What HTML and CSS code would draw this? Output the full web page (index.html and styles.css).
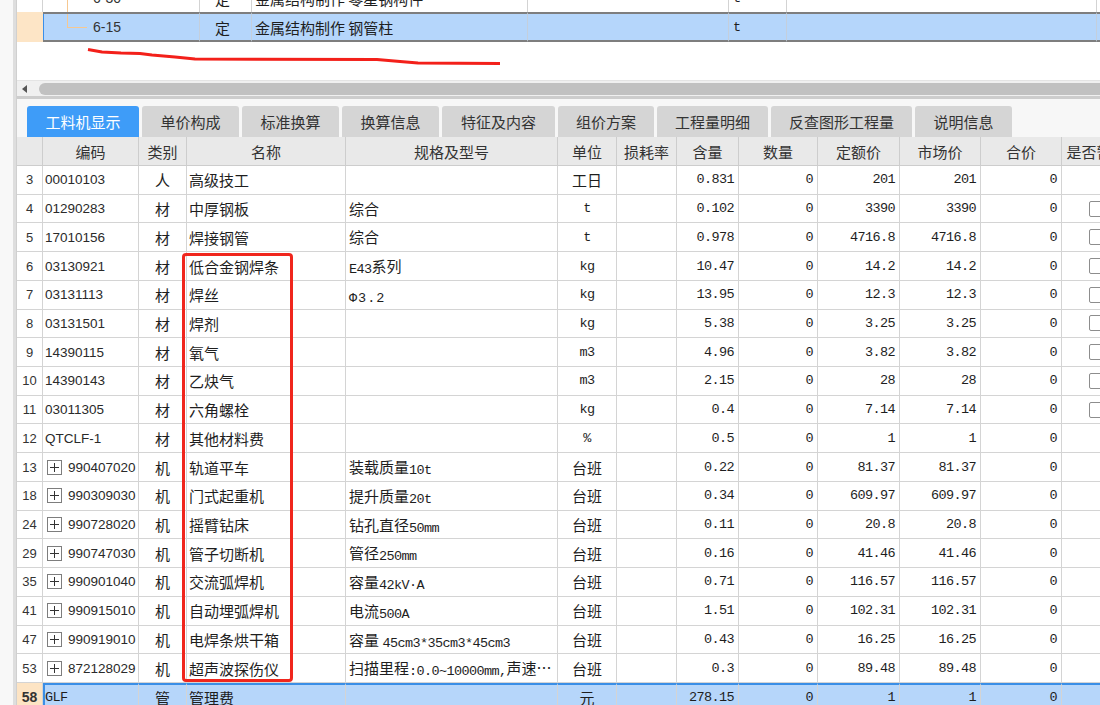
FILE: index.html
```html
<!DOCTYPE html>
<html lang="zh-CN">
<head>
<meta charset="utf-8">
<title>工料机显示</title>
<link rel="stylesheet" href="styles.css">
</head>
<body>
<div class="app">
  <div class="strip"></div>
  <div class="main">
    <div class="upper">
      <div class="trow prev">
        <span class="tn"></span>
        <span class="tcode"><i class="tree-v"></i><b class="tc-text">6-30</b></span>
        <span class="tcat">定</span>
        <span class="tname">金属结构制作 零星钢构件</span>
        <span></span>
        <span class="tunit"><i class="m">t</i></span>
        <span></span>
        <span></span>
      </div>
      <div class="trow sel">
        <span class="tn"></span>
        <span class="tcode first"><i class="tree-v short"></i><i class="tree-h"></i><b class="tc-text">6-15</b></span>
        <span class="tcat">定</span>
        <span class="tname">金属结构制作 钢管柱</span>
        <span></span>
        <span class="tunit"><i class="m">t</i></span>
        <span></span>
        <span></span>
      </div>
      <svg class="scribble" width="500" height="80" viewBox="0 0 500 80">
        <polyline points="71,49.5 85,52 104,53 123,53.5 135,55 158,57 178,59 360,59.5 383,61.5 401,63 483,63.5" fill="none" stroke="#f3201a" stroke-width="3" stroke-linejoin="round"/>
      </svg>
    </div>
    <div class="hscroll"><span class="arrow"></span><div class="thumb"></div></div>
    <div class="divider"></div>
    <div class="tabs">
      <div class="tab active w112">工料机显示</div>
      <div class="tab w97">单价构成</div>
      <div class="tab w97">标准换算</div>
      <div class="tab w97">换算信息</div>
      <div class="tab w113">特征及内容</div>
      <div class="tab w96">组价方案</div>
      <div class="tab w111">工程量明细</div>
      <div class="tab w141">反查图形工程量</div>
      <div class="tab w97">说明信息</div>
    </div>
    <div class="grid">
      <div class="r head">
        <span></span><span>编码</span><span>类别</span><span>名称</span><span>规格及型号</span><span>单位</span><span>损耗率</span><span>含量</span><span>数量</span><span>定额价</span><span>市场价</span><span>合价</span><span>是否暂估</span>
      </div>
      <div class="r"><span class="n">3</span><span class="code">00010103</span><span class="cat">人</span><span class="name">高级技工</span><span class="spec"></span><span class="unit">工日</span><span></span><span class="num">0.831</span><span class="num">0</span><span class="num">201</span><span class="num">201</span><span class="num">0</span><span class="chk"></span></div>
      <div class="r"><span class="n">4</span><span class="code">01290283</span><span class="cat">材</span><span class="name">中厚钢板</span><span class="spec">综合</span><span class="unit"><i class="m">t</i></span><span></span><span class="num">0.102</span><span class="num">0</span><span class="num">3390</span><span class="num">3390</span><span class="num">0</span><span class="chk"><i class="cb"></i></span></div>
      <div class="r"><span class="n">5</span><span class="code">17010156</span><span class="cat">材</span><span class="name">焊接钢管</span><span class="spec">综合</span><span class="unit"><i class="m">t</i></span><span></span><span class="num">0.978</span><span class="num">0</span><span class="num">4716.8</span><span class="num">4716.8</span><span class="num">0</span><span class="chk"><i class="cb"></i></span></div>
      <div class="r"><span class="n">6</span><span class="code">03130921</span><span class="cat">材</span><span class="name">低合金钢焊条</span><span class="spec"><i class="m">E43</i>系列</span><span class="unit"><i class="m">kg</i></span><span></span><span class="num">10.47</span><span class="num">0</span><span class="num">14.2</span><span class="num">14.2</span><span class="num">0</span><span class="chk"><i class="cb"></i></span></div>
      <div class="r"><span class="n">7</span><span class="code">03131113</span><span class="cat">材</span><span class="name">焊丝</span><span class="spec"><i class="m phi">Φ3.2</i></span><span class="unit"><i class="m">kg</i></span><span></span><span class="num">13.95</span><span class="num">0</span><span class="num">12.3</span><span class="num">12.3</span><span class="num">0</span><span class="chk"><i class="cb"></i></span></div>
      <div class="r"><span class="n">8</span><span class="code">03131501</span><span class="cat">材</span><span class="name">焊剂</span><span class="spec"></span><span class="unit"><i class="m">kg</i></span><span></span><span class="num">5.38</span><span class="num">0</span><span class="num">3.25</span><span class="num">3.25</span><span class="num">0</span><span class="chk"><i class="cb"></i></span></div>
      <div class="r"><span class="n">9</span><span class="code">14390115</span><span class="cat">材</span><span class="name">氧气</span><span class="spec"></span><span class="unit"><i class="m">m3</i></span><span></span><span class="num">4.96</span><span class="num">0</span><span class="num">3.82</span><span class="num">3.82</span><span class="num">0</span><span class="chk"><i class="cb"></i></span></div>
      <div class="r"><span class="n">10</span><span class="code">14390143</span><span class="cat">材</span><span class="name">乙炔气</span><span class="spec"></span><span class="unit"><i class="m">m3</i></span><span></span><span class="num">2.15</span><span class="num">0</span><span class="num">28</span><span class="num">28</span><span class="num">0</span><span class="chk"><i class="cb"></i></span></div>
      <div class="r"><span class="n">11</span><span class="code">03011305</span><span class="cat">材</span><span class="name">六角螺栓</span><span class="spec"></span><span class="unit"><i class="m">kg</i></span><span></span><span class="num">0.4</span><span class="num">0</span><span class="num">7.14</span><span class="num">7.14</span><span class="num">0</span><span class="chk"><i class="cb"></i></span></div>
      <div class="r"><span class="n">12</span><span class="code">QTCLF-1</span><span class="cat">材</span><span class="name">其他材料费</span><span class="spec"></span><span class="unit"><i class="m">%</i></span><span></span><span class="num">0.5</span><span class="num">0</span><span class="num">1</span><span class="num">1</span><span class="num">0</span><span class="chk"></span></div>
      <div class="r"><span class="n">13</span><span class="code"><i class="plus"></i>990407020</span><span class="cat">机</span><span class="name">轨道平车</span><span class="spec">装载质量<i class="m">10t</i></span><span class="unit">台班</span><span></span><span class="num">0.22</span><span class="num">0</span><span class="num">81.37</span><span class="num">81.37</span><span class="num">0</span><span class="chk"></span></div>
      <div class="r"><span class="n">18</span><span class="code"><i class="plus"></i>990309030</span><span class="cat">机</span><span class="name">门式起重机</span><span class="spec">提升质量<i class="m">20t</i></span><span class="unit">台班</span><span></span><span class="num">0.34</span><span class="num">0</span><span class="num">609.97</span><span class="num">609.97</span><span class="num">0</span><span class="chk"></span></div>
      <div class="r"><span class="n">24</span><span class="code"><i class="plus"></i>990728020</span><span class="cat">机</span><span class="name">摇臂钻床</span><span class="spec">钻孔直径<i class="m">50mm</i></span><span class="unit">台班</span><span></span><span class="num">0.11</span><span class="num">0</span><span class="num">20.8</span><span class="num">20.8</span><span class="num">0</span><span class="chk"></span></div>
      <div class="r"><span class="n">29</span><span class="code"><i class="plus"></i>990747030</span><span class="cat">机</span><span class="name">管子切断机</span><span class="spec">管径<i class="m">250mm</i></span><span class="unit">台班</span><span></span><span class="num">0.16</span><span class="num">0</span><span class="num">41.46</span><span class="num">41.46</span><span class="num">0</span><span class="chk"></span></div>
      <div class="r"><span class="n">35</span><span class="code"><i class="plus"></i>990901040</span><span class="cat">机</span><span class="name">交流弧焊机</span><span class="spec">容量<i class="m">42kV·A</i></span><span class="unit">台班</span><span></span><span class="num">0.71</span><span class="num">0</span><span class="num">116.57</span><span class="num">116.57</span><span class="num">0</span><span class="chk"></span></div>
      <div class="r"><span class="n">41</span><span class="code"><i class="plus"></i>990915010</span><span class="cat">机</span><span class="name">自动埋弧焊机</span><span class="spec">电流<i class="m">500A</i></span><span class="unit">台班</span><span></span><span class="num">1.51</span><span class="num">0</span><span class="num">102.31</span><span class="num">102.31</span><span class="num">0</span><span class="chk"></span></div>
      <div class="r"><span class="n">47</span><span class="code"><i class="plus"></i>990919010</span><span class="cat">机</span><span class="name">电焊条烘干箱</span><span class="spec">容量 <i class="m">45cm3*35cm3*45cm3</i></span><span class="unit">台班</span><span></span><span class="num">0.43</span><span class="num">0</span><span class="num">16.25</span><span class="num">16.25</span><span class="num">0</span><span class="chk"></span></div>
      <div class="r"><span class="n">53</span><span class="code"><i class="plus"></i>872128029</span><span class="cat">机</span><span class="name">超声波探伤仪</span><span class="spec">扫描里程<i class="m">:0.0~10000mm,</i>声速…</span><span class="unit">台班</span><span></span><span class="num">0.3</span><span class="num">0</span><span class="num">89.48</span><span class="num">89.48</span><span class="num">0</span><span class="chk"></span></div>
      <div class="r cur"><span class="n">58</span><span class="code"><i class="m">GLF</i></span><span class="cat">管</span><span class="name">管理费</span><span class="spec"></span><span class="unit">元</span><span></span><span class="num">278.15</span><span class="num">0</span><span class="num">1</span><span class="num">1</span><span class="num">0</span><span class="chk"></span></div>
    </div>
    <div class="redbox"></div>
  </div>
</div>
</body>
</html>
```
FILE: styles.css
```css
* { box-sizing: border-box; }
html, body { margin: 0; padding: 0; }
body {
  width: 1100px;
  height: 705px;
  overflow: hidden;
  background: #fff;
  font-family: "Noto Sans CJK SC", sans-serif;
  font-size: 15px;
  color: #1e1e1e;
}
i, b { font-style: normal; font-weight: normal; }

.app { display: flex; height: 705px; }
.strip {
  width: 16px;
  flex: none;
  background: #f8f8f8;
  border-right: 3px solid #dedede;
}
.main {
  flex: 1;
  position: relative;
  overflow: hidden;
  border-left: 1px solid #d0d0d0;
}

/* upper tree table */
.upper { height: 80px; position: relative; overflow: hidden; }
.trow {
  display: grid;
  grid-template-columns: 26px 157px 52px 276px 201px 58px 310px 60px;
  height: 28px;
}
.trow.prev { margin-top: -16px; }
.trow.sel { height: 30px; }
.trow > span {
  border-right: 1px solid #d3d3d3;
  display: flex;
  align-items: center;
  white-space: nowrap;
  overflow: hidden;
  position: relative;
}
.sel > span { background: #b5d6fb; border-top: 2px solid #7e7e7e; border-bottom: 2px solid #7e7e7e; border-right-color: #c4cfdc; }
.sel > .tn { background: #fde5c6; border-top: 0; border-bottom: 0; border-right: 0; }
.sel > .first { box-shadow: inset 1px 0 0 #3a8ee8; }
.tcode .tc-text { font-family: "Liberation Sans", sans-serif; font-size: 14px; color: #333; margin-left: 50px; }
.tree-v { position: absolute; left: 24px; top: -4px; bottom: 0; width: 1px; background: #f6c891; }
.tree-v.short { top: -2px; bottom: 13px; }
.tree-h { position: absolute; left: 24px; top: 13px; width: 20px; height: 1px; background: #f6c891; }
.tcat { justify-content: center; padding-right: 6px; }
.tname { padding-left: 3px; }
.tunit { padding-left: 4px; }
.scribble { position: absolute; left: 0; top: 0; }

/* horizontal scrollbar */
.hscroll {
  height: 16px;
  background: #f0f0f0;
  border-top: 1px solid #e4e4e4;
  display: flex;
  align-items: center;
}
.arrow {
  width: 0; height: 0;
  margin-left: 5px;
  border-top: 4px solid transparent;
  border-bottom: 4px solid transparent;
  border-right: 5px solid #555;
}
.thumb {
  flex: 1;
  height: 12px;
  margin-left: 12px;
  background: #c1c1c1;
  border-radius: 6px 0 0 6px;
}
.divider { height: 3px; background: #cdcdcd; }

/* tabs */
.tabs {
  height: 38px;
  display: flex;
  align-items: flex-end;
  gap: 3px;
  padding-left: 10px;
  background: #f7f7f7;
}
.tab {
  flex: none;
  height: 31px;
  background: #d5d5d5;
  border-radius: 3px 3px 0 0;
  display: flex;
  align-items: center;
  justify-content: center;
  color: #333;
  font-size: 15px;
}
.tab.active { background: #3e9cf8; color: #fff; }
.w112 { width: 112px; } .w97 { width: 97px; } .w113 { width: 113px; }
.w96 { width: 96px; } .w111 { width: 111px; } .w141 { width: 141px; }

/* lower grid */
.r {
  display: grid;
  grid-template-columns: 26px 96px 48px 159px 212px 59px 60px 62px 79px 82px 81px 81px 70px;
  height: 28.72px;
}
.r > span {
  border-right: 1px solid #d4d4d4;
  border-bottom: 1px solid #d4d4d4;
  display: flex;
  align-items: center;
  white-space: nowrap;
  overflow: hidden;
}
.r.head { height: 29px; background: #e9e9e9; }
.r.head > span { justify-content: center; color: #333; border-color: #cdcdcd; }
.r .n { justify-content: center; font-family: "Liberation Sans", sans-serif; font-size: 13px; color: #333; }
.r .code { font-family: "Liberation Sans", sans-serif; font-size: 13.5px; color: #2a2a2a; padding-left: 2px; }
.r .cat { justify-content: center; }
.r .name { padding-left: 2px; }
.r > .spec { display: block; padding-left: 3px; line-height: 27px; }
.r .unit { justify-content: center; }
.r .num {
  justify-content: flex-end;
  padding-right: 4px;
  font-family: "Liberation Mono", monospace;
  font-size: 13.5px;
  letter-spacing: -0.6px;
  color: #1e1e1e;
}
.m {
  font-family: "Liberation Mono", monospace;
  font-size: 13.5px;
  letter-spacing: -0.6px;
  color: #1e1e1e;
}
.spec .m { position: relative; top: 1px; }
.phi { letter-spacing: 1px; }
.chk { padding-left: 27px; }
.cb {
  display: block;
  width: 16px; height: 16px;
  border: 1px solid #8d8d8d;
  border-radius: 2px;
  background: #fff;
}
.plus {
  display: block;
  position: relative;
  flex: none;
  width: 15px; height: 15px;
  margin: 0 6px 0 2px;
  border: 1px solid #7d7d7d;
  background: #fff;
}
.plus::before { content: ""; position: absolute; left: 2px; right: 2px; top: 6px; height: 1px; background: #333; }
.plus::after { content: ""; position: absolute; top: 2px; bottom: 2px; left: 6px; width: 1px; background: #333; }

.r.cur > span { background: #b6d6fa; border-top: 2px solid #3a8ee6; }
.r.cur > .n { background: #fde4c4; border-top: 0; font-weight: bold; font-size: 14px; }
.r.cur > .code { box-shadow: inset 2px 0 0 #3a8ee6; }

.redbox {
  position: absolute;
  left: 165px;
  top: 253px;
  width: 111px;
  height: 429px;
  border: 3px solid #f0261d;
  border-radius: 4px;
  pointer-events: none;
}
```
